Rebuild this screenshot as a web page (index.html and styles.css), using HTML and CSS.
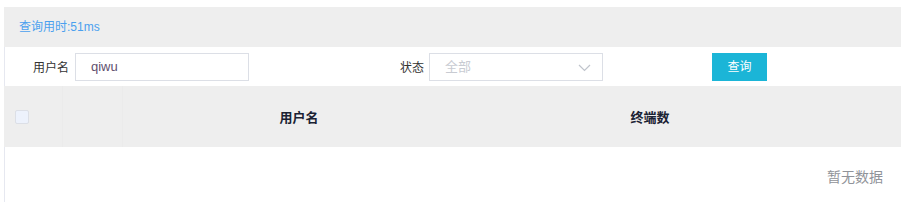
FILE: index.html
```html
<!DOCTYPE html>
<html>
<head>
<meta http-equiv="Content-Type" content="text/html; charset=utf-8" />
<title>用户终端查询</title>
<link rel="stylesheet" href="styles.css">
</head>
<body>
	<div class="page">
		<div class="costBar">查询用时:51ms</div>
		<div class="searchRow">
			<div class="field fieldUser">
				<label>用户名</label>
				<div class="textBox">qiwu</div>
			</div>
			<div class="field fieldState">
				<label>状态</label>
				<div class="selectBox">
					<span class="placeholder">全部</span>
					<svg class="arrow" width="13" height="8" viewBox="0 0 13 8">
						<path d="M1 1 L6.5 6.5 L12 1" fill="none" stroke="#c0c4cc" stroke-width="1.2" />
					</svg>
				</div>
			</div>
			<a class="btnQuery" href="#">查询</a>
		</div>
		<div class="table">
			<div class="thead">
				<div class="cell cellCheck"><span class="checkbox"></span></div>
				<div class="cell cellBlank"></div>
				<div class="cell">用户名</div>
				<div class="cell">终端数</div>
				<div class="cell"></div>
			</div>
			<div class="emptyRow">暂无数据</div>
		</div>
	</div>
</body>
</html>
```

FILE: styles.css
```css
body {
	margin: 0;
	font-family: "Liberation Sans", "Noto Sans CJK SC", sans-serif;
	background: #fff;
}

.page {
	margin-left: 4px;
	padding-top: 7px;
}

.costBar {
	height: 40px;
	line-height: 40px;
	padding-left: 15px;
	background: #eeeeee;
	color: #4aa0ee;
	font-size: 12px;
}

.searchRow {
	display: flex;
	align-items: center;
	height: 39px;
	border-left: 1px solid #e6e8f0;
}

.field {
	display: flex;
	align-items: center;
}

.field label {
	font-size: 12px;
	color: #333;
	text-align: right;
	margin-right: 6px;
}

.fieldUser label {
	width: 64px;
}

.fieldState {
	margin-left: 150px;
}

.fieldState label {
	width: 25px;
	margin-right: 5px;
}

.textBox,
.selectBox {
	box-sizing: border-box;
	width: 174px;
	height: 28px;
	line-height: 26px;
	border: 1px solid #dcdfe6;
	padding-left: 15px;
	font-size: 13px;
}

.textBox {
	color: #5f4f6e;
}

.selectBox {
	position: relative;
}

.selectBox .placeholder {
	color: #c8cbd2;
}

.selectBox .arrow {
	position: absolute;
	right: 11px;
	top: 10px;
}

.btnQuery {
	display: block;
	margin-left: 109px;
	width: 55px;
	height: 28px;
	line-height: 28px;
	text-align: center;
	background: #1bb5d7;
	color: #fff;
	font-size: 12px;
	text-decoration: none;
}

.table {
	border-left: 1px solid #e6e8f0;
}

.thead {
	display: grid;
	grid-template-columns: 59px 60px 352px 350px 1fr;
	height: 61px;
	background: #eeeeee;
	margin-left: -1px;
}

.thead .cell {
	display: flex;
	align-items: center;
	justify-content: center;
	font-size: 13px;
	font-weight: bold;
	color: #1a2233;
}

.thead .cellCheck,
.thead .cellBlank {
	border-right: 1px solid #ebebeb;
}

.thead .cellCheck {
	justify-content: flex-start;
	padding-left: 11px;
}

.checkbox {
	display: block;
	width: 12px;
	height: 12px;
	border: 1px solid #dcdfe6;
	border-radius: 2px;
	background: #edf2fc;
}

.emptyRow {
	height: 60px;
	line-height: 60px;
	text-align: right;
	padding-right: 18px;
	font-size: 14px;
	color: #909399;
}
```
